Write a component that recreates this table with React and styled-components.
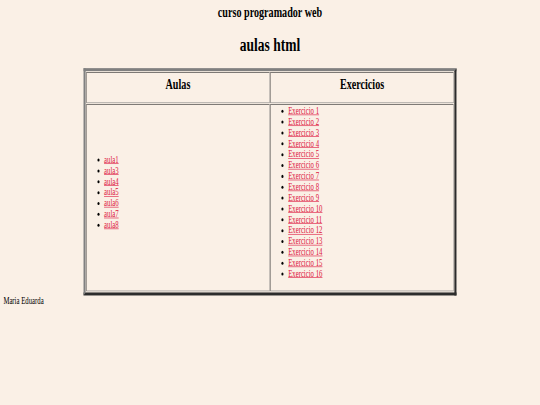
import React from "react";
import styled, { createGlobalStyle } from "styled-components";

const GlobalStyle = createGlobalStyle`
  html, body {
    margin: 0;
    padding: 0;
    background: #faf0e6;
    overflow: hidden;
  }
`;

const Viewport = styled.div`
  width: 540px;
  height: 405px;
  overflow: hidden;
  background: #faf0e6;
`;

const Page = styled.div`
  width: 1280px;
  box-sizing: border-box;
  padding: 8px;
  transform: scale(0.421875, 0.603);
  transform-origin: 0 0;
  font-family: "Liberation Serif", "Times New Roman", serif;
  font-size: 16px;
  color: #000;
`;

const Title = styled.h2`
  margin: 0 0 19.92px;
  font-size: 24px;
  font-weight: bold;
  text-align: center;
`;

const Heading = styled.h1`
  margin: 21.44px 0 19.5px;
  font-size: 32px;
  font-weight: bold;
  text-align: center;
`;

const Table = styled.table`
  width: 70%;
  margin: 0 auto;
  border: 5px outset gray;
  border-collapse: separate;
  border-spacing: 2px;
  table-layout: fixed;
`;

const HeadCell = styled.th`
  width: 50%;
  border: 1px inset gray;
  padding: 6px 1px 16px;
  font-size: 24px;
  font-weight: bold;
  text-align: center;
  vertical-align: top;
`;

const Cell = styled.td`
  border: 1px inset gray;
  padding: 1px;
  vertical-align: ${(p) => p.$valign || "middle"};
`;

const List = styled.ul`
  margin: 0 0 18px;
  padding-left: 40px;
  list-style: disc;
`;

const Link = styled.a`
  color: crimson;
  text-decoration: underline;
`;

const Author = styled.div`
  font-size: 16px;
`;

const aulas = ["aula1", "aula3", "aula4", "aula5", "aula6", "aula7", "aula8"];
const exercicios = Array.from({ length: 16 }, (_, i) => `Exercicio ${i + 1}`);

export default function App() {
  return (
    <Viewport>
      <GlobalStyle />
      <Page>
        <Title>curso programador web</Title>
        <Heading>aulas html</Heading>
        <Table>
          <thead>
            <tr>
              <HeadCell>Aulas</HeadCell>
              <HeadCell>Exercicios</HeadCell>
            </tr>
          </thead>
          <tbody>
            <tr>
              <Cell>
                <List>
                  {aulas.map((a) => (
                    <li key={a}>
                      <Link href="#">{a}</Link>
                    </li>
                  ))}
                </List>
              </Cell>
              <Cell $valign="top">
                <List>
                  {exercicios.map((e) => (
                    <li key={e}>
                      <Link href="#">{e}</Link>
                    </li>
                  ))}
                </List>
              </Cell>
            </tr>
          </tbody>
        </Table>
        <Author>Maria Eduarda</Author>
      </Page>
    </Viewport>
  );
}
